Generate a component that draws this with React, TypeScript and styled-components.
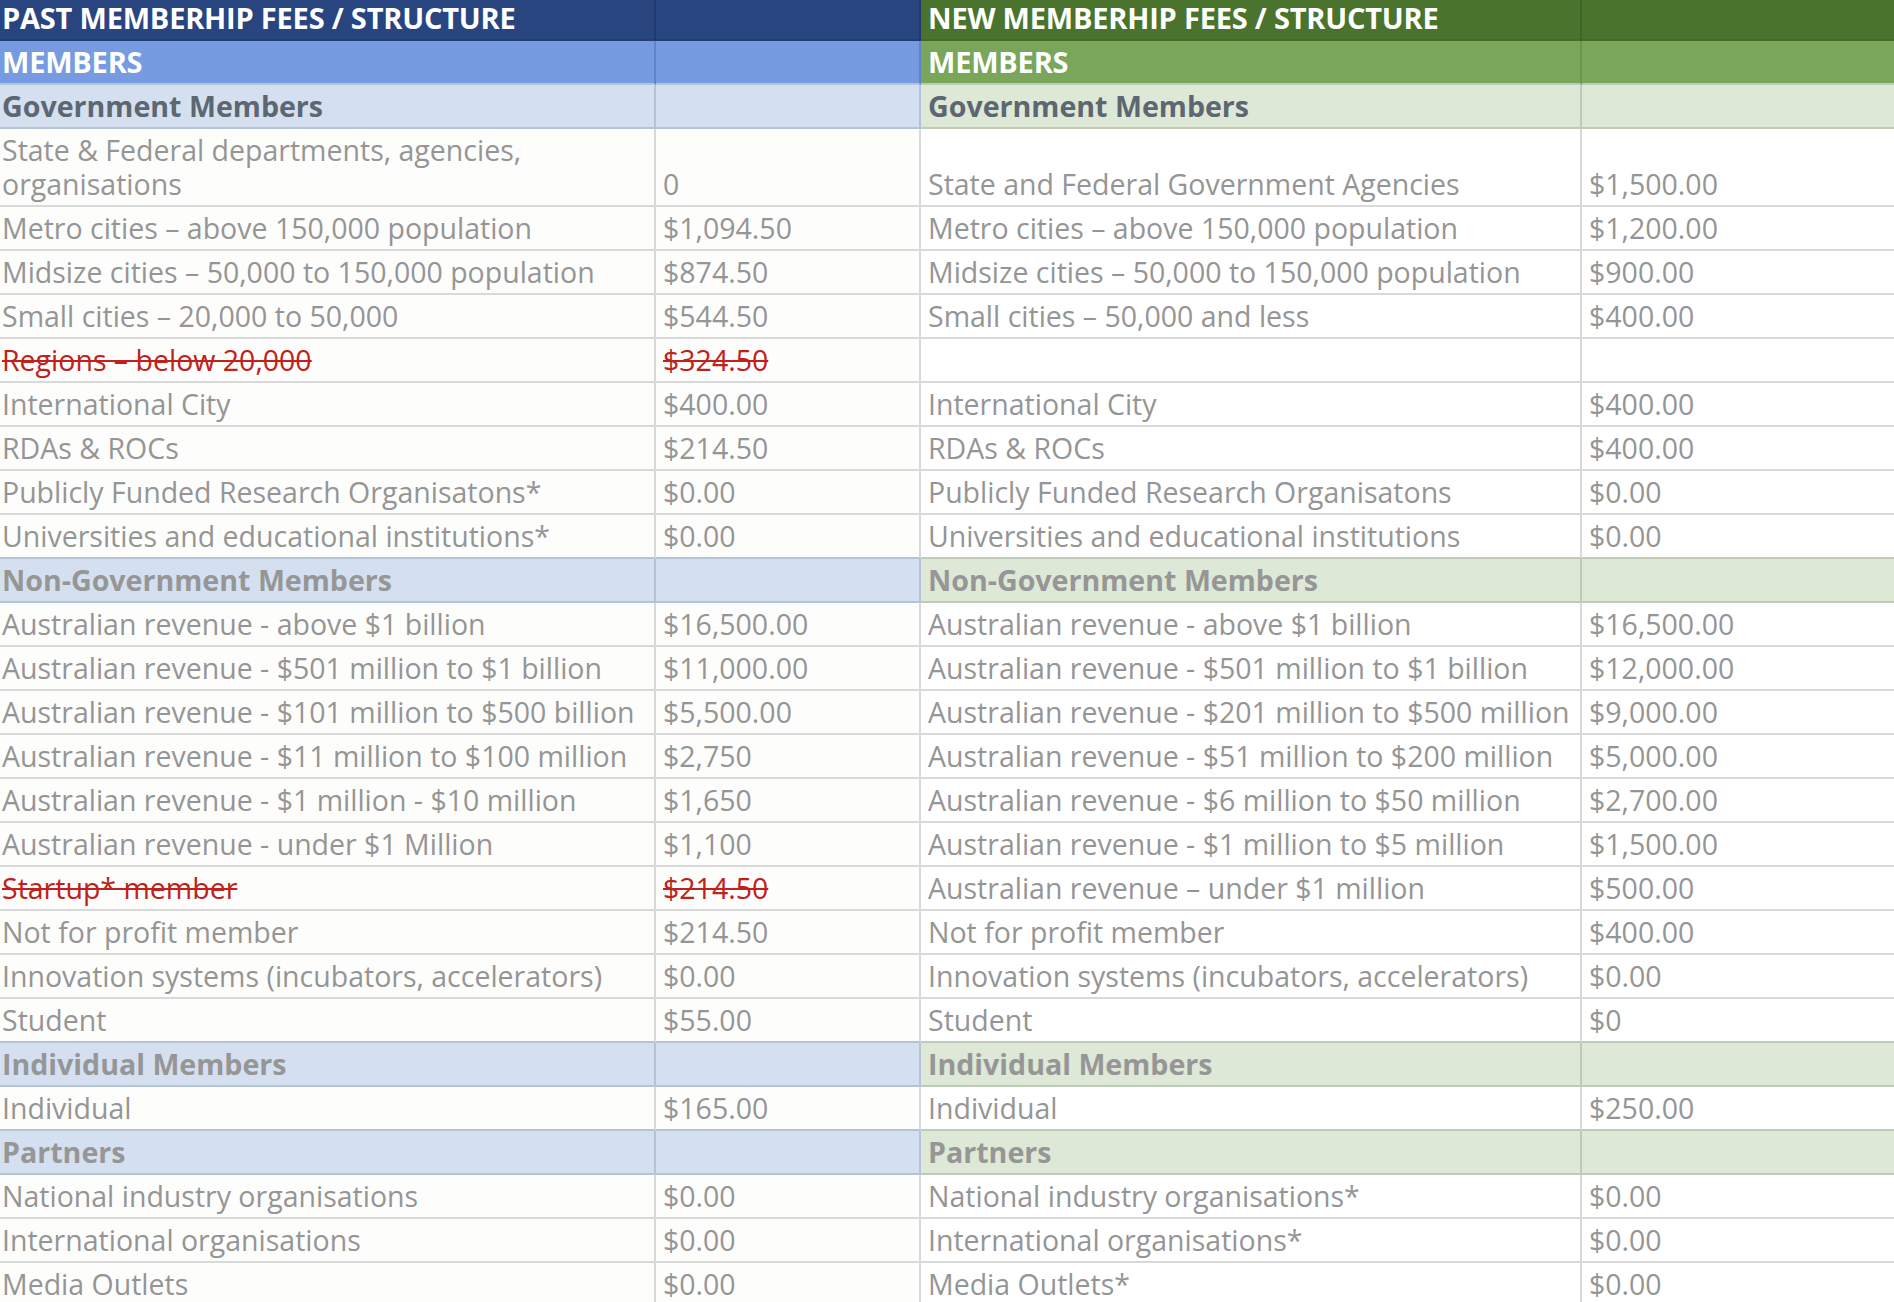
import React from "react";
import styled, { createGlobalStyle, css } from "styled-components";

const GlobalStyle = createGlobalStyle`
  html, body {
    margin: 0;
    padding: 0;
    background: #ffffff;
    overflow: hidden;
  }
  body {
    font-family: "Open Sans", "Noto Sans", "Liberation Sans", sans-serif;
  }
  * { box-sizing: border-box; }
`;

type Kind = "title" | "members" | "section" | "body";
type Side = "past" | "next";

interface Tone {
  bg: string;
  line: string;
  bottom: string;
  color: string;
}

const tones: Record<Side, Record<Kind, Tone>> = {
  past: {
    title: { bg: "#284580", line: "#213a6d", bottom: "#223d73", color: "#ffffff" },
    members: { bg: "#769be1", line: "#5e84c9", bottom: "#a9b8cf", color: "#ffffff" },
    section: { bg: "#d4e0f0", line: "#b5c3d7", bottom: "#b5c3d7", color: "#969696" },
    body: { bg: "#fdfdfb", line: "#d9d9d9", bottom: "#d9d9d9", color: "#959595" },
  },
  next: {
    title: { bg: "#4a742d", line: "#3f6526", bottom: "#436b29", color: "#ffffff" },
    members: { bg: "#79a65a", line: "#6a964d", bottom: "#b9c5b2", color: "#ffffff" },
    section: { bg: "#dde8d6", line: "#bfcab9", bottom: "#bfcab9", color: "#969696" },
    body: { bg: "#ffffff", line: "#d9d9d9", bottom: "#d9d9d9", color: "#959595" },
  },
};

const COLS = "656px 265px 661px 312px";

const Sheet = styled.div`
  width: 1894px;
  height: 1302px;
  overflow: hidden;
  display: flex;
  flex-direction: column;
`;

const RowGrid = styled.div<{ $height: number }>`
  display: grid;
  grid-template-columns: ${COLS};
  height: ${(p) => p.$height}px;
  flex: none;
`;

const Cell = styled.div<{
  $tone: Tone;
  $bottom: string;
  $kind: Kind;
  $last?: boolean;
  $first?: boolean;
  $strike?: boolean;
  $dark?: boolean;
}>`
  display: flex;
  align-items: flex-end;
  background: ${(p) => p.$tone.bg};
  border-bottom: 2px solid ${(p) => p.$bottom};
  border-right: ${(p) => (p.$last ? "none" : `2px solid ${p.$tone.line}`)};
  padding: 0 4px 4px ${(p) => (p.$first ? "2px" : "7px")};
  color: ${(p) => (p.$dark ? "#5c6771" : p.$tone.color)};
  font-size: 28.5px;
  line-height: 34px;
  font-weight: 400;
  white-space: pre-line;
  min-width: 0;

  ${(p) =>
    (p.$kind === "title" || p.$kind === "members") &&
    css`
      font-size: 29px;
      font-weight: 700;
      letter-spacing: -0.2px;
      white-space: nowrap;
    `}
  ${(p) =>
    p.$kind === "section" &&
    css`
      font-size: 28.6px;
      font-weight: 700;
      white-space: nowrap;
    `}
  ${(p) =>
    p.$strike &&
    css`
      color: #c1211b;
      text-decoration: line-through;
      text-decoration-thickness: 2px;
    `}
`;

interface RowData {
  kind: Kind;
  cells: [string, string, string, string];
  strike?: boolean;
  dark?: boolean;
  height?: number;
}

const rows: RowData[] = [
  { kind: "title", cells: ["PAST MEMBERHIP FEES / STRUCTURE", "", "NEW MEMBERHIP FEES / STRUCTURE", ""], height: 41 },
  { kind: "members", cells: ["MEMBERS", "", "MEMBERS", ""] },
  { kind: "section", cells: ["Government Members", "", "Government Members", ""], dark: true },
  {
    kind: "body",
    cells: ["State & Federal departments, agencies,\norganisations", "0", "State and Federal Government Agencies", "$1,500.00"],
    height: 78,
  },
  { kind: "body", cells: ["Metro cities – above 150,000 population", "$1,094.50", "Metro cities – above 150,000 population", "$1,200.00"] },
  { kind: "body", cells: ["Midsize cities – 50,000 to 150,000 population", "$874.50", "Midsize cities – 50,000 to 150,000 population", "$900.00"] },
  { kind: "body", cells: ["Small cities – 20,000 to 50,000", "$544.50", "Small cities – 50,000 and less", "$400.00"] },
  { kind: "body", cells: ["Regions – below 20,000", "$324.50", "", ""], strike: true },
  { kind: "body", cells: ["International City", "$400.00", "International City", "$400.00"] },
  { kind: "body", cells: ["RDAs & ROCs", "$214.50", "RDAs & ROCs", "$400.00"] },
  { kind: "body", cells: ["Publicly Funded Research Organisatons*", "$0.00", "Publicly Funded Research Organisatons", "$0.00"] },
  { kind: "body", cells: ["Universities and educational institutions*", "$0.00", "Universities and educational institutions", "$0.00"] },
  { kind: "section", cells: ["Non-Government Members", "", "Non-Government Members", ""] },
  { kind: "body", cells: ["Australian revenue - above $1 billion", "$16,500.00", "Australian revenue - above $1 billion", "$16,500.00"] },
  { kind: "body", cells: ["Australian revenue - $501 million to $1 billion", "$11,000.00", "Australian revenue - $501 million to $1 billion", "$12,000.00"] },
  { kind: "body", cells: ["Australian revenue - $101 million to $500 billion", "$5,500.00", "Australian revenue - $201 million to $500 million", "$9,000.00"] },
  { kind: "body", cells: ["Australian revenue - $11 million to $100 million", "$2,750", "Australian revenue - $51 million to $200 million", "$5,000.00"] },
  { kind: "body", cells: ["Australian revenue - $1 million - $10 million", "$1,650", "Australian revenue - $6 million to $50 million", "$2,700.00"] },
  { kind: "body", cells: ["Australian revenue - under $1 Million", "$1,100", "Australian revenue - $1 million to $5 million", "$1,500.00"] },
  { kind: "body", cells: ["Startup* member", "$214.50", "Australian revenue – under $1 million", "$500.00"], strike: true },
  { kind: "body", cells: ["Not for profit member", "$214.50", "Not for profit member", "$400.00"] },
  { kind: "body", cells: ["Innovation systems (incubators, accelerators)", "$0.00", "Innovation systems (incubators, accelerators)", "$0.00"] },
  { kind: "body", cells: ["Student", "$55.00", "Student", "$0"] },
  { kind: "section", cells: ["Individual Members", "", "Individual Members", ""] },
  { kind: "body", cells: ["Individual", "$165.00", "Individual", "$250.00"] },
  { kind: "section", cells: ["Partners", "", "Partners", ""] },
  { kind: "body", cells: ["National industry organisations", "$0.00", "National industry organisations*", "$0.00"] },
  { kind: "body", cells: ["International organisations", "$0.00", "International organisations*", "$0.00"] },
  { kind: "body", cells: ["Media Outlets", "$0.00", "Media Outlets*", "$0.00"] },
];

const FeeRow: React.FC<{ row: RowData; next?: RowData }> = ({ row, next }) => {
  const sides: Side[] = ["past", "past", "next", "next"];
  return (
    <RowGrid $height={row.height ?? 44}>
      {row.cells.map((text, i) => {
        const side = sides[i];
        const tone = tones[side][row.kind];
        const bottom =
          next && next.kind === "section" ? tones[side].section.bottom : tone.bottom;
        return (
          <Cell
            key={i}
            $tone={tone}
            $bottom={bottom}
            $kind={row.kind}
            $first={i === 0}
            $last={i === 3}
            $strike={row.strike && side === "past"}
            $dark={row.dark}
          >
            <span>{text}</span>
          </Cell>
        );
      })}
    </RowGrid>
  );
};

export default function App() {
  return (
    <>
      <GlobalStyle />
      <Sheet>
        {rows.map((row, i) => (
          <FeeRow key={i} row={row} next={rows[i + 1]} />
        ))}
      </Sheet>
    </>
  );
}
